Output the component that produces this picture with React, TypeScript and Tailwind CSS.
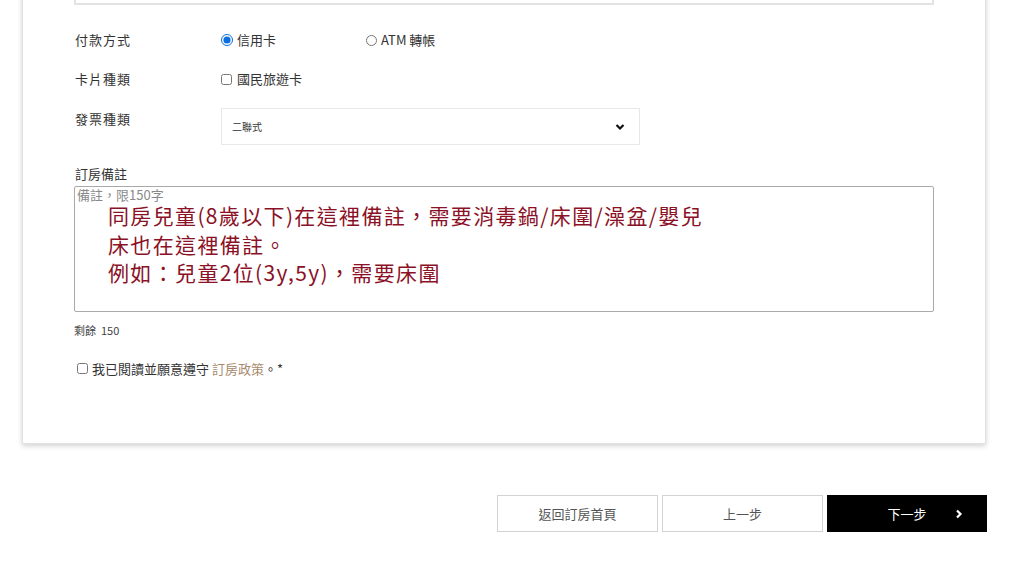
import React from "react";

const font = { fontFamily: '"Noto Sans CJK TC", "Noto Sans", sans-serif' };

export default function App() {
  return (
    <div className="w-[1024px] h-[563px] overflow-hidden bg-white text-[#333]" style={font}>
      <div className="ml-[22px] w-[964px] -mt-[42px] h-[486px] bg-white border border-[#e2e2e2] shadow-[0_2px_5px_rgba(0,0,0,0.18)] px-[51px] flex flex-col">
        {/* previous field (cut off) */}
        <div className="h-[46px] border-2 border-[#e3e3e3] border-t-0 shrink-0" />

        {/* 付款方式 */}
        <div className="mt-[25px] h-[20px] flex items-center text-[13px]">
          <div className="w-[147px] pl-[1px] tracking-[1px]">付款方式</div>
          <label className="flex items-center w-[145px]">
            <input type="radio" name="pay" defaultChecked className="m-0 w-[12px] h-[12px] accent-[#0b6ee0]" />
            <span className="ml-[4px]">信用卡</span>
          </label>
          <label className="flex items-center">
            <input type="radio" name="pay" className="m-0 w-[11px] h-[11px]" />
            <span className="ml-[4px]">ATM 轉帳</span>
          </label>
        </div>

        {/* 卡片種類 */}
        <div className="mt-[19px] h-[20px] flex items-center text-[13px]">
          <div className="w-[147px] pl-[1px] tracking-[1px]">卡片種類</div>
          <label className="flex items-center">
            <input type="checkbox" className="m-0 w-[11px] h-[11px]" />
            <span className="ml-[5px]">國民旅遊卡</span>
          </label>
        </div>

        {/* 發票種類 */}
        <div className="mt-[19px] flex items-start text-[13px]">
          <div className="w-[147px] pl-[1px] pt-[2px] leading-[18px] tracking-[1px]">發票種類</div>
          <div className="w-[419px] h-[37px] border border-[#e8e8e8] flex items-center justify-between pl-[10px] pr-[14px]">
            <span className="text-[10px]">二聯式</span>
            <svg width="10" height="8" viewBox="0 0 10 8">
              <path d="M1.5 2 L5 5.5 L8.5 2" fill="none" stroke="#111" strokeWidth="2.2" />
            </svg>
          </div>
        </div>

        {/* 訂房備註 */}
        <div className="mt-[20px] text-[13px] leading-[18px] pl-[1px]">訂房備註</div>
        <div className="mt-[3px] h-[126px] border border-[#a9a9a9] rounded-[2px] px-[2px] pt-[1px]">
          <div className="text-[13px] leading-[14px] text-[#8a8a8a]">備註，限150字</div>
          <div className="mt-[1px] pl-[31px] text-[21px] leading-[24px] tracking-[1.35px] text-[#8b1126] flex flex-col gap-[4.5px]">
            <div>同房兒童(8歲以下)在這裡備註，需要消毒鍋/床圍/澡盆/嬰兒</div>
            <div>床也在這裡備註。</div>
            <div>例如：兒童2位(3y,5y)，需要床圍</div>
          </div>
        </div>

        <div className="mt-[11px] text-[11px] leading-[14px] text-[#444]">剩餘&nbsp;&nbsp;150</div>

        <label className="mt-[22px] ml-[3px] flex items-center text-[13px]">
          <input type="checkbox" className="m-0 w-[11px] h-[11px]" />
          <span className="ml-[4px]">我已閱讀並願意遵守 <span className="text-[#a88a6c]">訂房政策</span>。*</span>
        </label>
      </div>

      {/* buttons */}
      <div className="mt-[51px] ml-[497px] flex gap-[4px] text-[13px]">
        <button className="w-[161px] h-[37px] border border-[#d3d3d3] bg-white text-[#555]">返回訂房首頁</button>
        <button className="w-[161px] h-[37px] border border-[#d3d3d3] bg-white text-[#555]">上一步</button>
        <button className="w-[160px] h-[37px] bg-black text-white relative">
          下一步
          <svg className="absolute right-[24px] top-[14px]" width="8" height="10" viewBox="0 0 8 10">
            <path d="M2 1.5 L5.5 5 L2 8.5" fill="none" stroke="#fff" strokeWidth="2.2" />
          </svg>
        </button>
      </div>
    </div>
  );
}
